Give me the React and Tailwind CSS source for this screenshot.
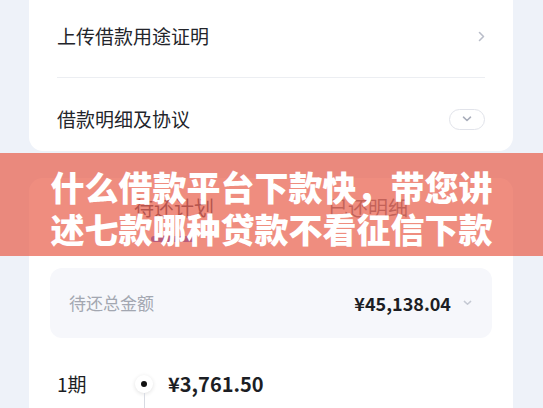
import React from "react";

const font = { fontFamily: '"Noto Sans CJK SC", "Noto Sans", sans-serif' };

function ChevronRight() {
  return (
    <svg width="7" height="11" viewBox="0 0 7 11" fill="none">
      <path d="M1.5 1.5L5.5 5.5L1.5 9.5" stroke="#b9bdc9" strokeWidth="1.6" strokeLinecap="round" strokeLinejoin="round" />
    </svg>
  );
}

function ChevronDown({ color = "#a7acb9", w = 10, h = 6 }) {
  return (
    <svg width={w} height={h} viewBox="0 0 10 6" fill="none">
      <path d="M1.5 1.2L5 4.5L8.5 1.2" stroke={color} strokeWidth="1.6" strokeLinecap="round" strokeLinejoin="round" />
    </svg>
  );
}

export default function App() {
  return (
    <div
      className="relative h-[408px] w-[543px] overflow-hidden bg-[#eef2f9]"
      style={font}
    >
      {/* Card 1 */}
      <div className="mx-[29px] w-[484px] rounded-b-[14px] bg-white px-[28px]">
        <div className="flex h-[77px] items-center justify-between pb-[5px]">
          <span className="text-[19px] leading-[28px] text-[#23252b]">上传借款用途证明</span>
          <ChevronRight />
        </div>
        <div className="h-px bg-[#eceef2]" />
        <div className="flex h-[73px] items-center justify-between pt-[9px]">
          <span className="text-[19px] leading-[28px] text-[#23252b]">借款明细及协议</span>
          <div className="flex h-[21px] w-[36px] items-center justify-center rounded-full border border-[#e1e3ea]">
            <ChevronDown color="#a9aebb" w={10} h={6} />
          </div>
        </div>
      </div>

      {/* Card 2 */}
      <div className="mx-[29px] mt-[27px] h-[300px] w-[484px] rounded-t-[14px] bg-white">
        <div className="flex justify-center gap-[114px] pt-[16px]">
          <div className="flex w-[80px] flex-col items-center">
            <span className="text-[20px] leading-[28px] text-[#3a3f58]">待还计划</span>
            <div className="mt-[14px] h-[6px] w-[46px] rounded-full bg-[#4b5cf0]" />
          </div>
          <div className="flex w-[80px] flex-col items-center">
            <span className="text-[20px] leading-[28px] text-[#6b7080]">已还明细</span>
          </div>
        </div>

        <div className="mx-[21px] mt-[26px] flex h-[70px] items-center justify-between rounded-[12px] bg-[#f6f7fb] pl-[19px] pr-[20px]">
          <span className="text-[17px] leading-[24px] text-[#a3a7b1]">待还总金额</span>
          <div className="flex items-center gap-[12px]">
            <span className="text-[18px] font-bold leading-[24px] text-[#1c1e24]">¥45,138.04</span>
            <ChevronDown color="#c5c9d3" w={9} h={6} />
          </div>
        </div>

        <div className="mt-[34px] flex pl-[28px]">
          <div className="flex w-[78px] flex-col">
            <span className="h-[24px] text-[19px] leading-[24px] text-[#1c1e24]">1期</span>
            <span className="mt-[9px] text-[13px] leading-[20px] text-[#a3a7b1]">2024/08/15</span>
          </div>
          <div className="flex w-[18px] flex-col items-center">
            <div className="mt-[3px] flex h-[18px] w-[18px] items-center justify-center rounded-full bg-white shadow-[0_1px_4px_rgba(0,0,0,0.12)]">
              <div className="h-[6px] w-[6px] rounded-full bg-[#111]" />
            </div>
            <div className="h-[40px] w-px bg-[#d7dae2]" />
          </div>
          <div className="ml-[15px] flex flex-col">
            <span className="h-[24px] text-[20px] font-bold leading-[24px] text-[#1c1e24]">¥3,761.50</span>
            <div className="mt-[9px] flex gap-[40px] text-[13px] leading-[20px] text-[#a3a7b1]">
              <span>本金 ¥3,402.15</span>
              <span>利息 ¥359.35</span>
            </div>
          </div>
        </div>
      </div>

      {/* Banner overlay */}
      <div className="absolute left-0 right-0 top-[153px] flex h-[103px] flex-col items-center justify-center bg-[#e85c48]/70 pt-[6px]">
        <span className="text-[34px] font-black leading-[42px] text-white">什么借款平台下款快，带您讲</span>
        <span className="text-[34px] font-black leading-[42px] text-white">述七款哪种贷款不看征信下款</span>
      </div>
    </div>
  );
}
